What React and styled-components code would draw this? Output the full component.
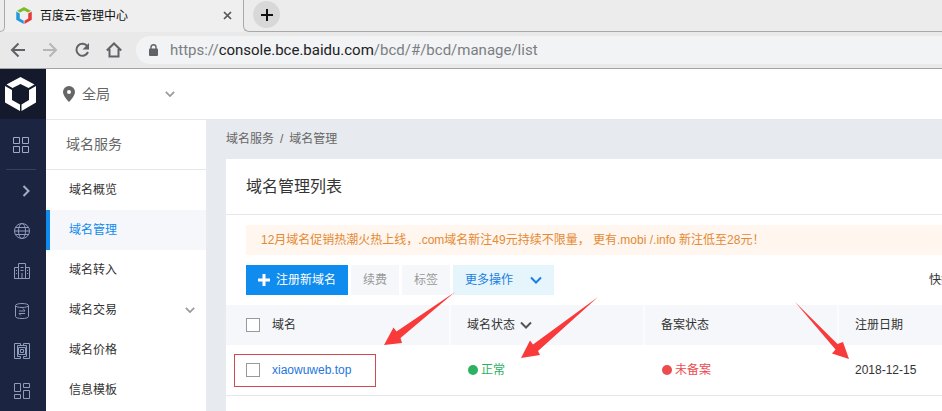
import React from 'react';
import styled, { createGlobalStyle, css } from 'styled-components';

const GlobalStyle = createGlobalStyle`
  *, *::before, *::after { box-sizing: border-box; }
  body {
    margin: 0;
    background: #e7eaef;
    font: 12px/20px "Liberation Sans", "Noto Sans CJK SC", sans-serif;
    color: #333;
    overflow: hidden;
  }
  button, input { font: inherit; color: inherit; margin: 0; padding: 0; }
  button { border: 0; background: none; cursor: pointer; }
  a { color: inherit; text-decoration: none; }
  svg { display: block; flex: none; }
`;

const Page = styled.div`
  position: relative;
  display: flex;
  flex-direction: column;
  min-height: 100vh;
  overflow: hidden;
`;

/* Browser frame */
const TabStrip = styled.div`
  display: flex;
  height: 32px;
  background: #ececec;
`;
const TabEdge = styled.div`
  width: 5px;
  border: solid #a9a9a9;
  border-width: 0 1px 1px 0;
  border-bottom-right-radius: 6px;
`;
const Tab = styled.div`
  display: flex;
  align-items: center;
  width: 238px;
  padding: 0 11px 1px;
  background: #efefef;
  color: #111;
`;
const TabTitle = styled.span`
  flex: 1;
  margin-left: 8px;
`;
const TabRest = styled.div`
  flex: 1;
  padding: 1px 0 0 9px;
  border: solid #a9a9a9;
  border-width: 0 0 1px 1px;
  border-bottom-left-radius: 6px;
`;
const NewTab = styled.button`
  display: grid;
  place-items: center;
  width: 27px;
  height: 27px;
  border-radius: 50%;
  background: #d8d8d8;
`;
const IconButton = styled.button`
  display: grid;
  place-items: center;
`;
const Toolbar = styled.div`
  display: flex;
  align-items: center;
  gap: 16px;
  height: 37px;
  padding-left: 10px;
  border-bottom: 1px solid #a3a3a3;
  background: #e9e9e9;
`;
const AddressBar = styled.div`
  display: flex;
  flex: 1;
  align-items: center;
  gap: 12px;
  height: 28px;
  margin-left: -2px;
  padding: 0 0 1px 13px;
  border-radius: 14px 0 0 14px;
  background: #f1f3f4;
  font: 15px/24px Roboto, "Open Sans", sans-serif;
  color: #7b7e82;
  b { font-weight: 400; color: #202124; }
`;

/* Console */
const Console = styled.div`
  display: flex;
  flex: 1;
`;
const Rail = styled.nav`
  display: flex;
  flex: none;
  flex-direction: column;
  width: 46px;
  background: #1b2440;
`;
const RailLogo = styled.a`
  display: grid;
  place-items: center;
  height: 50px;
  padding-right: 5px;
  background: #141a2c;
`;
const RailItem = styled.button`
  display: grid;
  place-items: center;
  height: ${(p) => (p.$first ? 51 : 40)}px;
  margin-right: ${(p) => (p.$first ? 10 : 0)}px;
  margin-left: ${(p) => (p.$first ? 6 : 0)}px;
  padding-top: 2px;
  padding-right: ${(p) => (p.$first ? 0 : 2)}px;
  padding-left: ${(p) => (p.$shift ? 8 : 0)}px;
  border-bottom: ${(p) => (p.$first ? '1px solid #34405c' : '0')};
`;
const Body = styled.div`
  display: flex;
  flex: 1;
  flex-direction: column;
  min-width: 0;
`;
const RegionBar = styled.header`
  display: flex;
  align-items: center;
  height: 51px;
  padding-left: 17px;
  border-bottom: 1px solid #e6e8ec;
  background: #fff;
`;
const RegionButton = styled.button`
  display: flex;
  align-items: center;
  width: 112px;
  gap: 7px;
  font-size: 14px;
  color: #666;
  svg:last-child { margin-left: auto; }
`;
const Columns = styled.div`
  display: flex;
  flex: 1;
`;
const Sidebar = styled.nav`
  flex: none;
  width: 160px;
  background: #fff;
`;
const SideTitle = styled.h2`
  margin: 0;
  height: 50px;
  padding-left: 20px;
  border-bottom: 1px solid #e6e8ec;
  font-size: 14px;
  font-weight: 400;
  line-height: 48px;
  color: #666;
`;
const SideLink = styled.a`
  display: flex;
  align-items: center;
  justify-content: space-between;
  height: 40px;
  padding: 0 11px 0 19px;
  border-left: 4px solid transparent;
  ${(p) => p.$active && css`
    border-color: #108cee;
    background: #f6f7fb;
    color: #108cee;
  `}
`;
const Main = styled.main`
  flex: 1;
  min-width: 0;
  padding-left: 20px;
  overflow: hidden;
`;
const Breadcrumb = styled.nav`
  display: flex;
  gap: 6px;
  padding: 9px 0 10px;
  color: #666;
`;
const Card = styled.section`
  min-width: 771px;
  min-height: 252px;
  background: #fff;
`;
const CardTitle = styled.h1`
  margin: 0;
  height: 56px;
  padding-left: 20px;
  border-bottom: 1px solid #e6e8ec;
  font-size: 16px;
  font-weight: 400;
  line-height: 56px;
`;
const Notice = styled.p`
  margin: 10px 20px;
  padding: 5px 15px;
  background: #fef6ef;
  color: #e58a33;
  white-space: pre;
`;
const Actions = styled.div`
  display: flex;
  align-items: center;
  gap: 3px;
  margin-bottom: 10px;
  padding: 0 20px;
`;
const tones = {
  primary: css`background: #108cee; color: #fff;`,
  disabled: css`background: #f6f7fb; color: #999;`,
  menu: css`background: #e6f4fc; color: #1a7fe0;`,
};
const Action = styled.button`
  display: flex;
  align-items: center;
  gap: ${(p) => (p.$tone === 'menu' ? 17 : 6)}px;
  height: 30px;
  padding: 0 12px;
  ${(p) => tones[p.$tone]}
`;
const QuickView = styled.span`
  margin-left: auto;
`;
const Table = styled.table`
  width: 100%;
  table-layout: fixed;
  border-collapse: separate;
  border-spacing: 0;
  text-align: left;
`;
const Th = styled.th`
  width: ${(p) => p.$width};
  height: 40px;
  padding: 0 0 0 ${(p) => (p.$first ? 20 : 16)}px;
  border-right: 2px solid #fbfcfd;
  background: #f6f7fb;
  font-weight: 400;
`;
const Td = styled.td`
  height: 51px;
  padding: 0 0 0 ${(p) => (p.$first ? 8 : 16)}px;
  border-bottom: 1px solid #e6e8ec;
`;
const Inline = styled.div`
  display: flex;
  align-items: center;
  gap: ${(p) => p.$gap}px;
`;
const MarkedDomain = styled(Inline)`
  width: 142px;
  height: 33px;
  padding-left: 11px;
  border: 1px solid #cf4a50;
  a { color: #2476dc; }
`;
const Check = styled.input.attrs({ type: 'checkbox' })`
  appearance: none;
  width: 14px;
  height: 14px;
  border: 1px solid #999;
  background: #fff;
  &:checked { background: #108cee; }
`;
const Status = styled.span`
  display: flex;
  align-items: center;
  gap: 3px;
  padding-left: 1px;
  color: ${(p) => p.$color};
  &::before {
    content: "";
    width: 10px;
    height: 10px;
    border-radius: 50%;
    background: ${(p) => p.$color};
  }
`;
const Annotations = styled.svg`
  position: absolute;
  top: 0;
  left: 0;
  pointer-events: none;
`;

function Stroke({ size = 16, box = size, color = '#5f6368', width = 2, children }) {
  return (
    <svg width={size} height={size} viewBox={`0 0 ${box} ${box}`} fill="none" stroke={color} strokeWidth={width} aria-hidden="true">
      {children}
    </svg>
  );
}

function Chevron({ size = 12, color = '#999', width = 2 }) {
  return <Stroke size={size} box={12} color={color} width={width}><path d="M1 3.5l5 5 5-5" /></Stroke>;
}

function CubeLogo({ width, height, colors }) {
  return (
    <svg width={width} height={height} viewBox="0 0 31 34" aria-hidden="true">
      <path fill={colors[0]} d="M1.500 7.500 15.500 0l14 7.500-6 3.500-8-4-8 4z" />
      <path fill={colors[1]} d="M0 9l7 4v10l8 4.500v6.500L0 25.500z" />
      <path fill={colors[2]} d="M31 9l-7 4v10l-7.500 4.500v6.500L31 25.500z" />
    </svg>
  );
}

const railIcons = [
  { label: '全球网络', art: <><circle cx="8" cy="8" r="7.500" /><ellipse cx="8" cy="8" rx="3.500" ry="7.500" /><path d="M.5 8h15M2 4.500h12M2 11.500h12" /></> },
  { label: '企业服务', art: <><path d="M.5 15.500v-11h4v11zM4.500 15.500V.5h7v15M11.500 4.500h4v11H.5M6.500 4.500h3M6.500 7.500h3M8 10v5.500M2 7.500h1M2 10.500h1M13 7.500h1M13 10.500h1" /></> },
  { label: '数据存储', art: <><path d="M1.500 2.500v11c0 2.700 13 2.700 13 0v-11M5 8h6L9 5.500M11 10.500H5l2 2" /><ellipse cx="8" cy="2.500" rx="6.500" ry="2" /></> },
  { label: '计算资源', art: <><path d="M6.500 2.500V.5h-6v15h6v-2h-3v-11h9v11h-3v2h6V.5h-6v2" /><path d="M4.500 4.500h7v7h-7zM6.500 6.500h3v3h-3z" /></> },
  { label: '模板中心', art: <path d="M.5.500h6v8h-6zM.5 11.500h6v4h-6zM9.500.500h6v4h-6zM9.500 7.500h6v8h-6z" /> },
];

const sideLinks = [
  { text: '域名概览' },
  { text: '域名管理', active: true },
  { text: '域名转入' },
  { text: '域名交易', expandable: true },
  { text: '域名价格' },
  { text: '信息模板' },
];

function BrowserFrame() {
  return (
    <>
      <TabStrip>
        <TabEdge />
        <Tab>
          <CubeLogo width={16} height={17} colors={['#79bd28', '#2398dc', '#e53838']} />
          <TabTitle>百度云-管理中心</TabTitle>
          <IconButton aria-label="关闭标签页"><Stroke size={9} color="#555" width={1.7}><path d="M1 1l7 7M8 1l-7 7" /></Stroke></IconButton>
        </Tab>
        <TabRest>
          <NewTab aria-label="新标签页"><Stroke size={12} color="#111"><path d="M6 0v12M0 6h12" /></Stroke></NewTab>
        </TabRest>
      </TabStrip>
      <Toolbar>
        <IconButton aria-label="后退"><Stroke><path d="M15 8H2M8.500 1.500L2 8l6.500 6.500" /></Stroke></IconButton>
        <IconButton aria-label="前进"><Stroke color="#b4b6b8"><path d="M1 8h13M7.500 1.500L14 8l-6.500 6.500" /></Stroke></IconButton>
        <IconButton aria-label="刷新">
          <Stroke><path d="M13.500 4.500A6 6 0 1 0 14 10" /><path d="M15 1v6.500H8.500z" fill="#5f6368" stroke="none" /></Stroke>
        </IconButton>
        <IconButton aria-label="主页"><Stroke><path d="M.8 8.500L8 1.500l7.200 7M3.500 7v7.500h9V7" /></Stroke></IconButton>
        <AddressBar>
          <svg width="9" height="12" viewBox="0 0 9 12" aria-hidden="true">
            <rect y="4.500" width="9" height="7.500" rx="1" fill="#5f6368" />
            <path d="M2 5V3a2.500 2.300 0 0 1 5 0v2" fill="none" stroke="#5f6368" strokeWidth="1.400" />
          </svg>
          <span>https://<b>console.bce.baidu.com</b>/bcd/#/bcd/manage/list</span>
        </AddressBar>
      </Toolbar>
    </>
  );
}

function ServiceRail() {
  return (
    <Rail aria-label="产品">
      <RailLogo href="#" aria-label="百度云"><CubeLogo width={31} height={34} colors={['#fff', '#fff', '#fff']} /></RailLogo>
      <RailItem $first aria-label="全部产品">
        <Stroke color="#a0abc8" width={1}><path d="M.5.500h6v6h-6zM9.500.500h6v6h-6zM.5 9.500h6v6h-6zM9.500 9.500h6v6h-6z" /></Stroke>
      </RailItem>
      <RailItem $shift aria-label="展开">
        <Stroke size={12} color="#a6aec3"><path d="M3.500 1l5 5-5 5" /></Stroke>
      </RailItem>
      {railIcons.map((item) => (
        <RailItem key={item.label} aria-label={item.label}><Stroke color="#8f9bbb" width={1}>{item.art}</Stroke></RailItem>
      ))}
    </Rail>
  );
}

function DomainTable() {
  return (
    <Table>
      <thead>
        <tr>
          <Th $first $width="225px"><Inline $gap={12}><Check aria-label="全选" /><span>域名</span></Inline></Th>
          <Th $width="194px"><Inline $gap={5}><span>域名状态</span><Chevron color="#555" /></Inline></Th>
          <Th $width="194px">备案状态</Th>
          <Th>注册日期</Th>
        </tr>
      </thead>
      <tbody>
        <tr>
          <Td $first>
            <MarkedDomain $gap={12}><Check aria-label="选择 xiaowuweb.top" /><a href="#domain">xiaowuweb.top</a></MarkedDomain>
          </Td>
          <Td><Status $color="#2cb162">正常</Status></Td>
          <Td><Status $color="#ec4b50">未备案</Status></Td>
          <Td>2018-12-15</Td>
        </tr>
      </tbody>
    </Table>
  );
}

export default function App() {
  return (
    <Page lang="zh-CN">
      <GlobalStyle />
      <BrowserFrame />
      <Console>
        <ServiceRail />
        <Body>
          <RegionBar>
            <RegionButton>
              <svg width="12" height="16" viewBox="0 0 12 16" aria-hidden="true">
                <path fill="#666" fillRule="evenodd" d="M6 0a6 6 0 0 1 6 6c0 4-6 10-6 10S0 10 0 6a6 6 0 0 1 6-6zm0 4a2 2 0 1 0 0 4 2 2 0 0 0 0-4z" />
              </svg>
              <span>全局</span>
              <Chevron size={10} />
            </RegionButton>
          </RegionBar>
          <Columns>
            <Sidebar aria-label="域名服务">
              <SideTitle>域名服务</SideTitle>
              {sideLinks.map((link) => (
                <SideLink key={link.text} href="#menu" $active={link.active}>
                  {link.text}
                  {link.expandable && <Chevron size={10} />}
                </SideLink>
              ))}
            </Sidebar>
            <Main>
              <Breadcrumb aria-label="位置"><a href="#service">域名服务</a><span>/</span><span>域名管理</span></Breadcrumb>
              <Card>
                <CardTitle>域名管理列表</CardTitle>
                <Notice>12月域名促销热潮火热上线，.com域名新注49元持续不限量， 更有.mobi /.info 新注低至28元！</Notice>
                <Actions>
                  <Action $tone="primary">
                    <Stroke size={12} color="#fff" width={3}><path d="M6 0v12M0 6h12" /></Stroke>
                    注册新域名
                  </Action>
                  <Action $tone="disabled" disabled>续费</Action>
                  <Action $tone="disabled" disabled>标签</Action>
                  <Action $tone="menu">更多操作<Chevron color="#1a7fe0" /></Action>
                  <QuickView>快捷查看</QuickView>
                </Actions>
                <DomainTable />
              </Card>
            </Main>
          </Columns>
        </Body>
      </Console>
      <Annotations width="942" height="411" viewBox="0 0 942 411" fill="#f93a3a" aria-hidden="true">
        <path d="M455 292L396.500 331.500 393.500 327.500 384 345 402 343 400.500 338z" />
        <path d="M598 297L533 344.500 530 340.500 521 358 540 355 538 351z" />
        <path d="M795 302L837.500 344 843 342 849 359 832 353.500 835.500 349.500z" />
      </Annotations>
    </Page>
  );
}
